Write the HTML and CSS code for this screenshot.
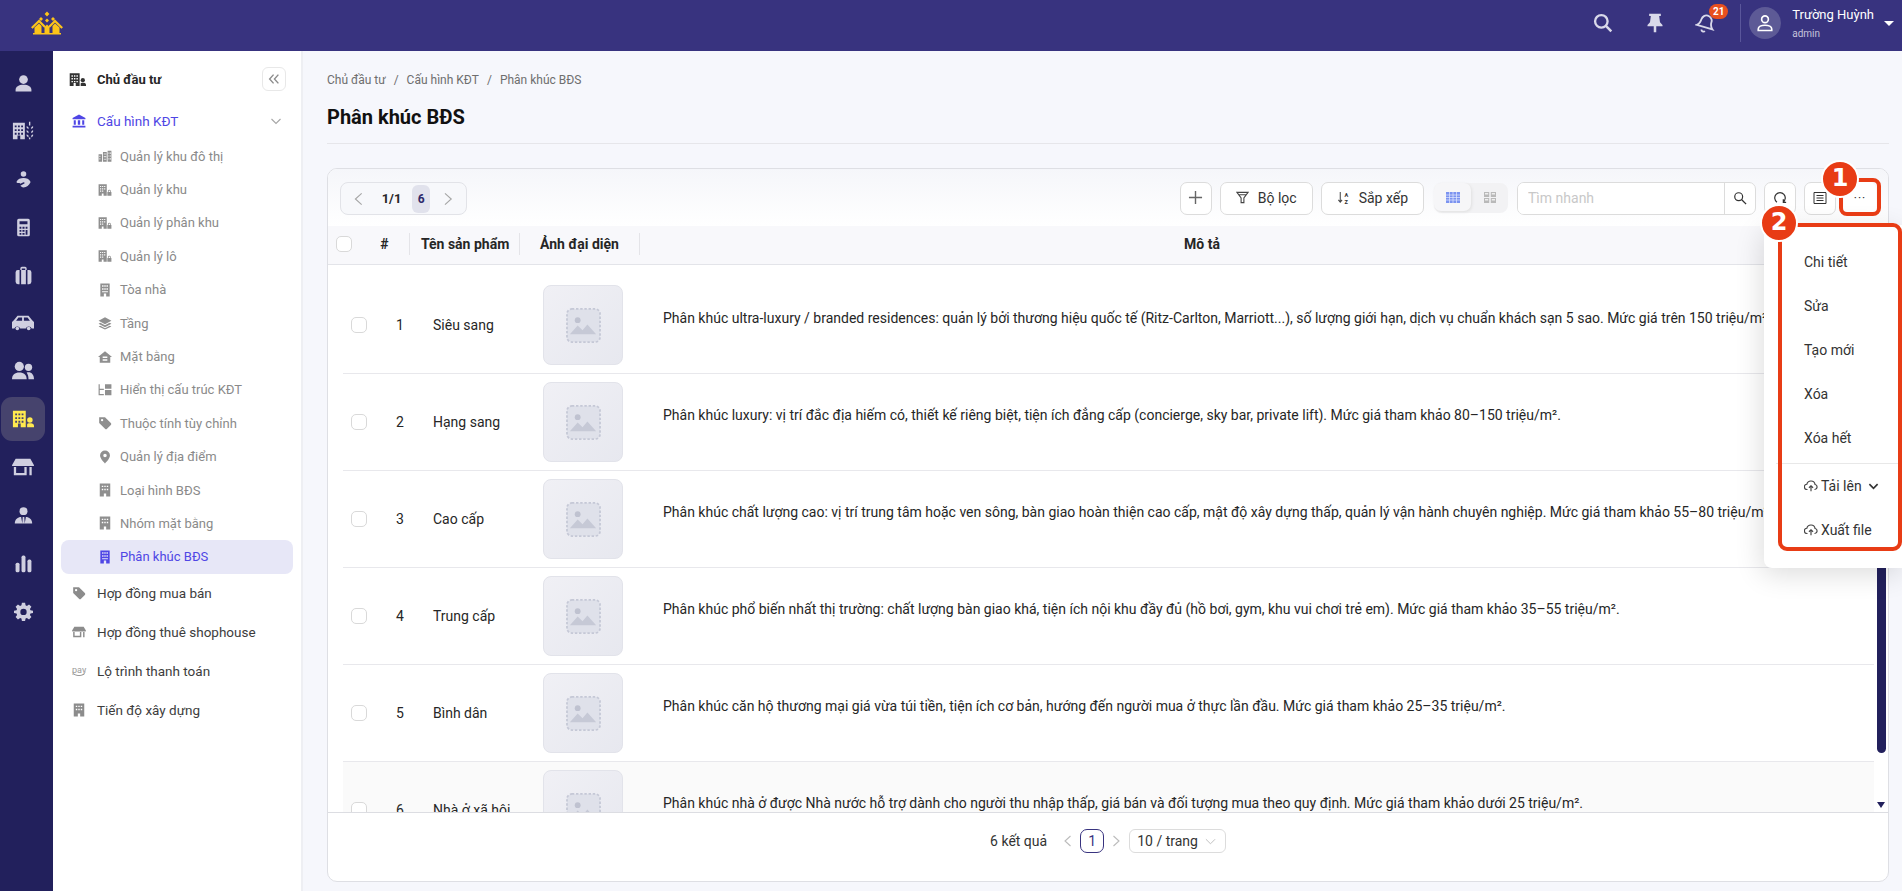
FILE: index.html
```html
<!DOCTYPE html>
<html lang="vi">
<head>
    <meta charset="UTF-8">
    <title>Phân khúc BĐS</title>
    <link rel="stylesheet" href="styles.css">
</head>
<body>
    <svg class="sprites" width="0" height="0">
        <symbol id="i-user" viewBox="0 0 24 24"><circle cx="12" cy="7" r="5.5"/><path d="M2 22v-2c0-4 4-6.5 10-6.5s10 2.500 10 6.500v2z"/></symbol>
        <symbol id="i-city" viewBox="0 0 24 24"><path d="M1 3h13v18H9v-4H6v4H1zM3 6v2h2V6zm3.500 0v2h2V6zM10 6v2h2V6zM3 10v2h2v-2zm3.500 0v2h2v-2zM10 10v2h2v-2zM3 14v2h2v-2zm3.500 0v2h2v-2zM10 14v2h2v-2z" fill-rule="evenodd"/><path d="M18.500 2H20v4h-1.500zM16 6.500l2 1.500v2l-2-1.500zm7 0v2l-2 1.500V8zM16 11l2 1.500v2l-2-1.500zm7 0v2l-2 1.500v-2zM16 15.500l2 1.500v2l-2-1.500zm7 0v2l-2 1.500v-2zM18.500 19H20v2h-1.500z"/></symbol>
        <symbol id="i-blocks" viewBox="0 0 24 24"><path d="M1 9h6v13H1zM8.500 5H15v17H8.500zM16.500 3H23v19h-6.500zM2.500 11.500v2h1.500v-2zM10 7.500v2h1.500v-2zm2.500 0v2H14v-2zM10 12v2h1.500v-2zm2.500 0v2H14v-2zM18 6v2h1.500V6zm2.500 0v2H22V6zM18 11v2h1.500v-2zm2.500 0v2H22v-2zM2.500 16v2h1.500v-2zM10 16.500v2h1.500v-2zm2.500 0v2H14v-2zM18 16v2h1.500v-2zm2.500 0v2H22v-2z" fill-rule="evenodd"/></symbol>
        <symbol id="i-care" viewBox="0 0 24 24"><circle cx="12" cy="5" r="3.500"/><path d="M3 15c2-4 5-5 9-5s7 1 9 5c-2 4-5 7-9 7-2 0-3-1-4-2l5-3c1-.7 0-2-1-1.500l-4 2-1-1c-2 0-3 0-4-1.500z"/></symbol>
        <symbol id="i-calc" viewBox="0 0 24 24"><path d="M6 1h12a2 2 0 0 1 2 2v18a2 2 0 0 1-2 2H6a2 2 0 0 1-2-2V3a2 2 0 0 1 2-2zm1 3v4h10V4zM7 11v2.500h2.300V11zm3.700 0v2.500h2.600V11zm4 0v2.500H17V11zM7 15v2.500h2.300V15zm3.700 0v2.500h2.600V15zm4 0v6H17v-6zM7 19v2h2.300v-2zm3.700 0v2h2.600v-2z" fill-rule="evenodd"/></symbol>
        <symbol id="i-case" viewBox="0 0 24 24"><path d="M8 5V3a2 2 0 0 1 2-2h4a2 2 0 0 1 2 2v2h-1.800V3h-4.400v2zM5 5h2v18H5a3 3 0 0 1-3-3V8a3 3 0 0 1 3-3zm4 0h6v18H9zm8 0h2a3 3 0 0 1 3 3v12a3 3 0 0 1-3 3h-2z"/></symbol>
        <symbol id="i-car" viewBox="0 0 24 24"><path d="M6 4h12l4 5 2 2v7h-2.500a3.500 3.500 0 0 0-6.500 0H9a3.500 3.500 0 0 0-6.500 0H0v-7l2-2zm1 2L4.500 9.500H11V6zm6 0v3.500h6.500L17 6z" fill-rule="evenodd"/><circle cx="5.800" cy="18" r="2"/><circle cx="18.200" cy="18" r="2"/></symbol>
        <symbol id="i-users" viewBox="0 0 24 24"><circle cx="8" cy="7" r="5"/><circle cx="18" cy="8" r="4"/><path d="M0 21c0-5 3-7.500 8-7.500s8 2.500 8 7.500z"/><path d="M16 13.500c5-1 8 2 8 7.500h-6c0-3-.5-5-2-7.500z"/></symbol>
        <symbol id="i-owner" viewBox="0 0 24 24"><path d="M1 3h14v18H9.500v-4h-3v4H1zM3.500 6v2h2V6zM7 6v2h2V6zm3.500 0v2h2V6zM3.500 10v2h2v-2zM7 10v2h2v-2zm3.500 0v2h2v-2zM3.500 14v2h2v-2zM7 14v2h2v-2zm3.500 0v2h2v-2z" fill-rule="evenodd"/><circle cx="19.500" cy="13" r="3"/><path d="M16.500 21v-3c0-1 1-1.500 3-1.500s4.500.5 4.500 2.500v2z"/></symbol>
        <symbol id="i-shop" viewBox="0 0 24 24"><path d="M4 3h16l4 7c0 .8-.5 1-1 1H1c-.5 0-1-.2-1-1z"/><path d="M2 12h2.500v6.500h9V12H16v9H2zM19 12h2.500v9H19z"/></symbol>
        <symbol id="i-agent" viewBox="0 0 24 24"><circle cx="12" cy="6.500" r="5"/><path d="M1 22c0-5 4-8 8-8l1.500 8zM23 22c0-5-4-8-8-8l-1.500 8zM11 14h2l.5 8h-3z"/></symbol>
        <symbol id="i-chart" viewBox="0 0 24 24"><rect x="2" y="11" width="5" height="12" rx="2"/><rect x="9.500" y="2" width="5" height="21" rx="2"/><rect x="17" y="7" width="5" height="16" rx="2"/></symbol>
        <symbol id="i-gear" viewBox="0 0 24 24"><path d="M10 1h4l.6 3.200 1.700.7L19 3l3 3-1.900 2.700.7 1.700L24 11v3l-3.200.6-.7 1.700L22 19l-3 3-2.700-1.900-1.700.7L14 24h-4l-.6-3.200-1.700-.7L5 22l-3-3 1.900-2.700-.7-1.700L0 14v-3l3.200-.6.7-1.700L2 6l3-3 2.700 1.900 1.700-.7zm2 7.500a4 4 0 1 0 0 8 4 4 0 0 0 0-8z" fill-rule="evenodd"/></symbol>
        <symbol id="i-bank" viewBox="0 0 24 24"><path d="M12 1 23 7v2H1V7zM3 10.500h3.500v8H3zm7 0h4v8h-4zm7.500 0H21v8h-3.500zM1 20h22v3H1z"/></symbol>
        <symbol id="i-lock" viewBox="0 0 24 24"><path d="M1 2h14v20H9.500v-4h-3v4H1zM3.500 5v2h2V5zM7 5v2h2V5zm3.500 0v2h2V5zM3.500 9v2h2V9zM7 9v2h2V9zm3.500 0v2h2V9zM3.500 13v2h2v-2zM7 13v2h2v-2z" fill-rule="evenodd"/><path d="M16 22v-6.500h1V14a2.500 2.500 0 0 1 5 0v1.500h1V22zm2.300-6.500h2.400V14a1.200 1.200 0 0 0-2.400 0z" fill-rule="evenodd"/></symbol>
        <symbol id="i-hotel" viewBox="0 0 24 24"><path d="M4 1h16v22h-6v-5h-4v5H4zm3 3v2.500h2.500V4zm3.800 0v2.500h2.400V4zm3.700 0v2.500H17V4zM7 9v2.500h2.500V9zm3.800 0v2.500h2.400V9zm3.700 0v2.500H17V9zM7 14v2h10v-2z" fill-rule="evenodd"/></symbol>
        <symbol id="i-building" viewBox="0 0 24 24"><path d="M3 1h18v22h-7v-5h-4v5H3zm3.500 3.500V7H9V4.500zm4.300 0V7h2.400V4.500zm4.200 0V7h2.500V4.500zM6.500 10v2.500H9V10zm4.300 0v2.500h2.400V10zm4.200 0v2.500h2.500V10z" fill-rule="evenodd"/></symbol>
        <symbol id="i-layers" viewBox="0 0 24 24"><path d="M12 2 23 8l-11 6L1 8z"/><path d="M4 11.500l8 4.500 8-4.500 3 1.700-11 6-11-6z"/><path d="M4 16.500l8 4.500 8-4.500 3 1.500-11 5-11-5z"/></symbol>
        <symbol id="i-home" viewBox="0 0 24 24"><path d="M12 2 24 12h-3v10H3V12H0zm-4 9v2.500h8V11zm0 5v2.500h8V16z" fill-rule="evenodd"/></symbol>
        <symbol id="i-tree" viewBox="0 0 24 24"><path d="M1 2h2v8h7v2H3v7h7v2H1zM12 2h11v8H12zm0 10h11v9H12z" fill-rule="evenodd"/></symbol>
        <symbol id="i-tag" viewBox="0 0 24 24"><path d="M2 2h10l10 10a2.500 2.500 0 0 1 0 3.500L15.500 22a2.500 2.500 0 0 1-3.500 0L2 12zm5 3a2 2 0 1 0 0 4 2 2 0 0 0 0-4z" fill-rule="evenodd"/></symbol>
        <symbol id="i-pin" viewBox="0 0 24 24"><path d="M12 1a8.500 8.500 0 0 1 8.500 8.500C20.500 15 12 23 12 23S3.500 15 3.500 9.500A8.500 8.500 0 0 1 12 1zm0 5.500a3 3 0 1 0 0 6 3 3 0 0 0 0-6z" fill-rule="evenodd"/></symbol>
        <symbol id="i-upload" viewBox="0 0 24 24"><path d="M6 18H5.500a4.500 4.500 0 0 1-.6-9A7.200 7.200 0 0 1 19 9.500a4.300 4.300 0 0 1-.5 8.500H18" fill="none" stroke="currentColor" stroke-width="2"/><path d="M12 21v-9M8.500 15l3.500-3.500 3.500 3.500" fill="none" stroke="currentColor" stroke-width="2"/></symbol>
        <symbol id="i-image" viewBox="0 0 36 36"><rect x="1" y="1" width="34" height="34" rx="5" fill="#dfe1ea" stroke="#c5c8d6" stroke-width="1.800" stroke-dasharray="2.500 1.800"/><circle cx="12" cy="12.500" r="3" fill="#bfc2d0"/><path d="M4 27 12 18l5 5 5-6 9 10z" fill="#c6c9d6"/></symbol>
    </svg>

    <header class="topbar">
        <svg class="logo" viewBox="0 0 32 24" width="32" height="24">
            <path fill="#fcc419" d="M16 .5 18.400 3 16 5.500 13.600 3zM10 6l2 2-2 2-2-2zM22 6l2 2-2 2-2-2zM16 7.500l2 2-2 2-2-2z"/>
            <path fill="none" stroke="#fcc419" stroke-width="2.200" d="M.8 17 8 10l6 6M31.200 17 24 10l-6 6"/>
            <path fill="#fcc419" d="M3.500 16.500 8 12.500l2.500 2.500V22h-7zM13.500 16l2.500-2.500 2.500 2.500v6h-5zM21.500 15 24 12.500l4.500 4V22h-7z"/>
            <path fill="#fcc419" d="M2 22h28v1.500H2z"/>
        </svg>
        <div class="topbar-right">
            <svg class="top-search" viewBox="0 0 24 24" width="20" height="20"><circle cx="10" cy="10" r="7.500" fill="none" stroke="#d9d9ea" stroke-width="2.800"/><path d="M15.500 15.500 22 22" stroke="#d9d9ea" stroke-width="3"/></svg>
            <svg class="top-pin" viewBox="0 0 24 24" width="20" height="20"><path fill="#d9d9ea" d="M5 1h14v2.500h-2L18 11l3 3.500v1.500h-7.500v7h-3v-7H3v-1.500L6 11l1-7.500H5z"/></svg>
            <div class="bell">
                <svg viewBox="0 0 24 24" width="22" height="22"><path d="M2 14c3-1 4-3 5-6 1-3 4-5 7-4s5 4 4 7c-1 3-1 5 1 8zM7 19c0 2 2 3 4 2" fill="none" stroke="#d9d9ea" stroke-width="2"/></svg>
                <span class="badge">21</span>
            </div>
            <div class="top-sep"></div>
            <div class="avatar">
                <svg viewBox="0 0 24 24" width="18" height="18"><circle cx="12" cy="7" r="4.500" fill="none" stroke="#fff" stroke-width="2.200"/><path d="M3 22v-2c0-3 4-5 9-5s9 2 9 5v2z" fill="none" stroke="#fff" stroke-width="2.200"/></svg>
            </div>
            <div class="user-info">
                <div class="user-name">Trường Huỳnh</div>
                <div class="user-role">admin</div>
            </div>
            <span class="caret"></span>
        </div>
    </header>

    <div class="app">
        <nav class="rail">
            <a class="rail-item"><svg class="sm"><use href="#i-user"/></svg></a>
            <a class="rail-item"><svg><use href="#i-city"/></svg></a>
            <a class="rail-item"><svg class="sm"><use href="#i-care"/></svg></a>
            <a class="rail-item"><svg class="sm"><use href="#i-calc"/></svg></a>
            <a class="rail-item"><svg class="sm"><use href="#i-case"/></svg></a>
            <a class="rail-item"><svg><use href="#i-car"/></svg></a>
            <a class="rail-item"><svg><use href="#i-users"/></svg></a>
            <a class="rail-item active"><svg><use href="#i-owner"/></svg></a>
            <a class="rail-item"><svg><use href="#i-shop"/></svg></a>
            <a class="rail-item"><svg class="sm"><use href="#i-agent"/></svg></a>
            <a class="rail-item"><svg class="sm"><use href="#i-chart"/></svg></a>
            <a class="rail-item"><svg class="sm"><use href="#i-gear"/></svg></a>
        </nav>

        <aside class="sidebar">
            <div class="side-head">
                <svg class="side-head-icon"><use href="#i-owner"/></svg>
                <span class="side-title">Chủ đầu tư</span>
                <button class="collapse">
                    <svg viewBox="0 0 16 16" width="14" height="14"><path d="M7.500 3 3 8l4.500 5M13 3 8.500 8l4.500 5" fill="none" stroke="#8c8c8c" stroke-width="1.600"/></svg>
                </button>
            </div>
            <div class="group open">
                <svg class="group-icon"><use href="#i-bank"/></svg>
                <span>Cấu hình KĐT</span>
                <svg class="group-arrow" viewBox="0 0 12 12" width="12" height="12"><path d="M1.500 4 6 8.500 10.500 4" fill="none" stroke="#a6a6a6" stroke-width="1.100"/></svg>
            </div>
            <a class="sub"><svg><use href="#i-blocks"/></svg>Quản lý khu đô thị</a>
            <a class="sub"><svg><use href="#i-lock"/></svg>Quản lý khu</a>
            <a class="sub"><svg><use href="#i-lock"/></svg>Quản lý phân khu</a>
            <a class="sub"><svg><use href="#i-lock"/></svg>Quản lý lô</a>
            <a class="sub"><svg><use href="#i-hotel"/></svg>Tòa nhà</a>
            <a class="sub"><svg><use href="#i-layers"/></svg>Tầng</a>
            <a class="sub"><svg><use href="#i-home"/></svg>Mặt bằng</a>
            <a class="sub"><svg><use href="#i-tree"/></svg>Hiển thị cấu trúc KĐT</a>
            <a class="sub"><svg><use href="#i-tag"/></svg>Thuộc tính tùy chỉnh</a>
            <a class="sub"><svg><use href="#i-pin"/></svg>Quản lý địa điểm</a>
            <a class="sub"><svg><use href="#i-building"/></svg>Loại hình BĐS</a>
            <a class="sub"><svg><use href="#i-building"/></svg>Nhóm mặt bằng</a>
            <a class="sub current"><svg><use href="#i-hotel"/></svg>Phân khúc BĐS</a>
            <a class="group"><svg class="group-icon"><use href="#i-tag"/></svg><span>Hợp đồng mua bán</span></a>
            <a class="group"><svg class="group-icon"><use href="#i-shop"/></svg><span>Hợp đồng thuê shophouse</span></a>
            <a class="group"><span class="pay-icon">pay</span><span>Lộ trình thanh toán</span></a>
            <a class="group"><svg class="group-icon"><use href="#i-building"/></svg><span>Tiến độ xây dựng</span></a>
        </aside>

        <main class="content">
            <div class="breadcrumb"><span>Chủ đầu tư</span><i>/</i><span>Cấu hình KĐT</span><i>/</i><span>Phân khúc BĐS</span></div>
            <h1 class="page-title">Phân khúc BĐS</h1>

            <section class="card">
                <div class="toolbar">
                    <div class="pager-box">
                        <svg viewBox="0 0 12 12" width="14" height="14"><path d="M8.500 1 3 6l5.500 5" fill="none" stroke="#a6a6a6" stroke-width="1"/></svg>
                        <span class="pager-num">1/1</span>
                        <span class="pager-count">6</span>
                        <svg viewBox="0 0 12 12" width="14" height="14"><path d="M3.500 1 9 6l-5.500 5" fill="none" stroke="#a6a6a6" stroke-width="1"/></svg>
                    </div>
                    <div class="tools">
                        <button class="btn square"><svg viewBox="0 0 16 16" width="15" height="15"><path d="M8 1v14M1 8h14" stroke="#666" stroke-width="1.500"/></svg></button>
                        <button class="btn wide"><svg viewBox="0 0 14 14" width="13" height="13"><path d="M1 1.500h12L8.500 7.500v5h-3v-5zM3 4h8" fill="none" stroke="#444" stroke-width="1.200"/></svg>Bộ lọc</button>
                        <button class="btn wide"><svg viewBox="0 0 14 14" width="13" height="13"><path d="M3.500 1v11M1.500 9.500 3.500 12l2-2.500" fill="none" stroke="#444" stroke-width="1.100"/><text x="8" y="6" class="az">A</text><text x="8" y="13.500" class="az">Z</text></svg>Sắp xếp</button>
                        <div class="view-switch">
                            <span class="view on"><svg viewBox="0 0 14 11" width="14" height="11"><path fill="#7b93f0" d="M0 0h14v11H0z"/><path d="M0 3h14M0 5.500h14M0 8h14M3.500 0v11M7 0v11M10.500 0v11" stroke="#e4e9fd" stroke-width=".7"/></svg></span>
                            <span class="view"><svg viewBox="0 0 12 11" width="12" height="11"><path fill="#b9b9b9" d="M0 0h5.200v5H0zM6.800 0H12v5H6.800zM0 6h5.200v5H0zM6.800 6H12v5H6.800z"/><path fill="#eee" d="M1 1h3.200v1.500H1zM7.800 1H11v1.500H7.800zM1 7h3.200v1.500H1zM7.800 7H11v1.500H7.800z"/></svg></span>
                        </div>
                        <div class="search">
                            <input type="text" placeholder="Tìm nhanh">
                            <span class="search-btn"><svg viewBox="0 0 16 16" width="14" height="14"><circle cx="6.500" cy="6.500" r="4.500" fill="none" stroke="#333" stroke-width="1.400"/><path d="M10 10l5 5" stroke="#333" stroke-width="1.500"/></svg></span>
                        </div>
                        <button class="btn square"><svg viewBox="0 0 16 16" width="14" height="14"><path d="M4.500 12.800A6 6 0 1 1 11.500 12.800M11.800 9.500v3.500h3.200" fill="none" stroke="#333" stroke-width="1.400"/></svg></button>
                        <button class="btn square"><svg viewBox="0 0 14 12" width="14" height="12"><path d="M1 .5h12v11H1zM3.500 3.500h7M3.500 6h7M3.500 8.500h7" fill="none" stroke="#333" stroke-width="1"/></svg></button>
                        <button class="btn square more">···</button>
                    </div>
                </div>

                <div class="table-wrap">
                    <div class="table">
                        <div class="row head">
                            <div class="c-check"><span class="checkbox"></span></div>
                            <div class="c-no">#</div>
                            <div class="c-name">Tên sản phẩm</div>
                            <div class="c-img">Ảnh đại diện</div>
                            <div class="c-desc">Mô tả</div>
                        </div>
                        <div class="row first">
                            <div class="c-check"><span class="checkbox"></span></div>
                            <div class="c-no">1</div>
                            <div class="c-name">Siêu sang</div>
                            <div class="c-img"><span class="thumb"><svg><use href="#i-image"/></svg></span></div>
                            <div class="c-desc">Phân khúc ultra-luxury / branded residences: quản lý bởi thương hiệu quốc tế (Ritz-Carlton, Marriott...), số lượng giới hạn, dịch vụ chuẩn khách sạn 5 sao. Mức giá trên 150 triệu/m²</div>
                        </div>
                        <div class="row">
                            <div class="c-check"><span class="checkbox"></span></div>
                            <div class="c-no">2</div>
                            <div class="c-name">Hạng sang</div>
                            <div class="c-img"><span class="thumb"><svg><use href="#i-image"/></svg></span></div>
                            <div class="c-desc">Phân khúc luxury: vị trí đắc địa hiếm có, thiết kế riêng biệt, tiện ích đẳng cấp (concierge, sky bar, private lift). Mức giá tham khảo 80–150 triệu/m².</div>
                        </div>
                        <div class="row">
                            <div class="c-check"><span class="checkbox"></span></div>
                            <div class="c-no">3</div>
                            <div class="c-name">Cao cấp</div>
                            <div class="c-img"><span class="thumb"><svg><use href="#i-image"/></svg></span></div>
                            <div class="c-desc">Phân khúc chất lượng cao: vị trí trung tâm hoặc ven sông, bàn giao hoàn thiện cao cấp, mật độ xây dựng thấp, quản lý vận hành chuyên nghiệp. Mức giá tham khảo 55–80 triệu/m²</div>
                        </div>
                        <div class="row">
                            <div class="c-check"><span class="checkbox"></span></div>
                            <div class="c-no">4</div>
                            <div class="c-name">Trung cấp</div>
                            <div class="c-img"><span class="thumb"><svg><use href="#i-image"/></svg></span></div>
                            <div class="c-desc">Phân khúc phổ biến nhất thị trường: chất lượng bàn giao khá, tiện ích nội khu đầy đủ (hồ bơi, gym, khu vui chơi trẻ em). Mức giá tham khảo 35–55 triệu/m².</div>
                        </div>
                        <div class="row">
                            <div class="c-check"><span class="checkbox"></span></div>
                            <div class="c-no">5</div>
                            <div class="c-name">Bình dân</div>
                            <div class="c-img"><span class="thumb"><svg><use href="#i-image"/></svg></span></div>
                            <div class="c-desc">Phân khúc căn hộ thương mại giá vừa túi tiền, tiện ích cơ bản, hướng đến người mua ở thực lần đầu. Mức giá tham khảo 25–35 triệu/m².</div>
                        </div>
                        <div class="row hover">
                            <div class="c-check"><span class="checkbox"></span></div>
                            <div class="c-no">6</div>
                            <div class="c-name">Nhà ở xã hội</div>
                            <div class="c-img"><span class="thumb"><svg><use href="#i-image"/></svg></span></div>
                            <div class="c-desc">Phân khúc nhà ở được Nhà nước hỗ trợ dành cho người thu nhập thấp, giá bán và đối tượng mua theo quy định. Mức giá tham khảo dưới 25 triệu/m².</div>
                        </div>
                    </div>
                    <div class="scrollbar"><div class="scroll-thumb"></div><span class="scroll-arrow"></span></div>
                </div>

                <div class="card-foot">
                    <span class="foot-count">6 kết quả</span>
                    <svg viewBox="0 0 12 12" width="12" height="12"><path d="M8.500 1 3 6l5.500 5" fill="none" stroke="#bbb" stroke-width="1.100"/></svg>
                    <span class="page-cur">1</span>
                    <svg viewBox="0 0 12 12" width="12" height="12"><path d="M3.500 1 9 6l-5.500 5" fill="none" stroke="#bbb" stroke-width="1.100"/></svg>
                    <span class="page-size">10 / trang<svg viewBox="0 0 12 12" width="11" height="11"><path d="M1 3.500 6 8.500l5-5" fill="none" stroke="#bbb" stroke-width="1"/></svg></span>
                </div>
            </section>
        </main>
    </div>

    <div class="popover">
        <a>Chi tiết</a>
        <a>Sửa</a>
        <a>Tạo mới</a>
        <a>Xóa</a>
        <a>Xóa hết</a>
        <div class="pop-sep"></div>
        <a class="pop-icon"><svg width="14" height="14"><use href="#i-upload"/></svg>Tải lên<svg class="pop-arrow" viewBox="0 0 12 12" width="11" height="11"><path d="M1.500 3.500 6 8l4.500-4.500" fill="none" stroke="#333" stroke-width="1.800"/></svg></a>
        <a class="pop-icon"><svg width="14" height="14"><use href="#i-upload"/></svg>Xuất file</a>
    </div>

    <div class="mark mark-more"></div>
    <div class="mark mark-menu"></div>
    <div class="step step-1">1</div>
    <div class="step step-2">2</div>
</body>
</html>
```

FILE: styles.css
```css
* {
    box-sizing: border-box;
}
html, body {
    height: 100%;
}
body {
    margin: 0;
    font-family: Roboto, "Noto Sans", sans-serif;
    font-size: 14px;
    color: #262626;
    background: #f6f7fc;
    overflow: hidden;
}
.sprites {
    position: absolute;
}
a {
    color: inherit;
}

/* top bar */
.topbar {
    height: 51px;
    background: #38337f;
    display: flex;
    align-items: center;
    justify-content: space-between;
    padding: 0 8px 5px 31px;
}
.topbar-right {
    display: flex;
    align-items: center;
}
.top-search {
    margin-right: 32px;
}
.top-pin {
    margin-right: 30px;
}
.bell {
    position: relative;
    width: 22px;
    height: 22px;
    margin-right: 23px;
}
.badge {
    position: absolute;
    top: -8px;
    left: 14px;
    width: 19px;
    height: 15px;
    border-radius: 8px;
    background: #e8501f;
    color: #fff;
    font-size: 10px;
    font-weight: 700;
    line-height: 15px;
    text-align: center;
}
.top-sep {
    width: 1px;
    height: 38px;
    background: #5a569b;
    margin-right: 8px;
}
.avatar {
    width: 32px;
    height: 32px;
    border-radius: 50%;
    background: #5d5a96;
    display: flex;
    align-items: center;
    justify-content: center;
    margin-right: 11px;
}
.user-name {
    color: #fff;
    font-size: 13px;
    line-height: 16px;
}
.user-role {
    color: #c4c3dc;
    font-size: 10px;
    line-height: 12px;
    margin-top: 5px;
}
.caret {
    width: 0;
    height: 0;
    border-left: 5px solid transparent;
    border-right: 5px solid transparent;
    border-top: 5px solid #fff;
    margin-left: 10px;
}

.app {
    display: flex;
    height: calc(100vh - 51px);
}

/* icon rail */
.rail {
    width: 53px;
    flex: none;
    background: #22205c;
    padding: 10px 0 0 1px;
    display: flex;
    flex-direction: column;
}
.rail-item {
    width: 44px;
    height: 44px;
    flex: none;
    margin-bottom: 4px;
    display: flex;
    align-items: center;
    justify-content: center;
    border-radius: 11px;
}
.rail-item svg {
    width: 22px;
    height: 22px;
    fill: #d0cfe0;
}
.rail-item .sm {
    width: 19px;
    height: 19px;
}
.rail-item.active {
    background: #46436d;
}
.rail-item.active svg {
    fill: #ffe94f;
}

/* second sidebar */
.sidebar {
    width: 250px;
    flex: none;
    background: #fff;
    border-right: 2px solid #eeeff3;
    padding: 16px 8px 0;
}
.side-head {
    display: flex;
    align-items: center;
    height: 24px;
    padding-left: 8px;
    margin-bottom: 11px;
}
.side-head-icon {
    width: 17px;
    height: 17px;
    fill: #333;
    margin-right: 11px;
}
.side-title {
    font-size: 13px;
    font-weight: 700;
    flex: 1;
}
.collapse {
    width: 24px;
    height: 24px;
    padding: 0;
    background: #fff;
    border: 1px solid #e8e8e8;
    border-radius: 6px;
    display: flex;
    align-items: center;
    justify-content: center;
    margin-right: 7px;
}
.group {
    display: flex;
    align-items: center;
    height: 39px;
    padding-left: 11px;
    color: #3d3d3d;
    font-size: 13.5px;
}
.group.open {
    height: 37.5px;
    color: #4f46e5;
}
.group-icon {
    width: 14px;
    height: 14px;
    fill: #8c8c8c;
    margin-right: 11px;
}
.group.open .group-icon {
    fill: #4f46e5;
}
.group-arrow {
    margin-left: auto;
    margin-right: 11px;
}
.pay-icon {
    width: 14px;
    margin-right: 11px;
    font-size: 9px;
    color: #999;
    border-bottom: 1px solid #999;
    border-radius: 0 0 6px 6px;
    line-height: 9px;
    text-align: center;
}
.sub {
    display: flex;
    align-items: center;
    height: 33.4px;
    padding-left: 37px;
    color: #8a8a8a;
    font-size: 13px;
}
.sub svg {
    width: 14px;
    height: 14px;
    fill: #8f8f8f;
    margin-right: 8px;
}
.sub.current {
    background: #e7e7f7;
    border-radius: 8px;
    color: #4f46e5;
}
.sub.current svg {
    fill: #4f46e5;
}

/* content */
.content {
    flex: 1;
    min-width: 0;
    padding: 22px 13px 9px 24px;
    display: flex;
    flex-direction: column;
}
.breadcrumb {
    font-size: 12px;
    line-height: 14px;
    color: #6e6e6e;
}
.breadcrumb i {
    font-style: normal;
    margin: 0 8px;
}
.page-title {
    font-size: 20px;
    font-weight: 700;
    color: #111;
    margin: 18px 0 24px;
    line-height: 24px;
    padding-bottom: 14px;
    border-bottom: 1px solid #e6e6ea;
}
.card {
    flex: 1;
    min-height: 0;
    background: #fff;
    border: 1px solid #dedfe4;
    border-radius: 10px;
    display: flex;
    flex-direction: column;
    overflow: hidden;
}
.toolbar {
    height: 57px;
    flex: none;
    display: flex;
    align-items: flex-start;
    justify-content: space-between;
    padding: 13px 12px 0 12px;
    background: linear-gradient(#f5f6fa, #fff);
}
.pager-box {
    display: flex;
    align-items: center;
    width: 127px;
    height: 33px;
    border: 1px solid #e2e3e8;
    border-radius: 8px;
    background: #f7f8fb;
    padding: 0 11px;
}
.pager-num {
    font-size: 13px;
    font-weight: 700;
    margin-left: 16px;
    width: 31px;
}
.pager-count {
    width: 19px;
    height: 28px;
    background: #e1e2ec;
    border-radius: 6px;
    font-size: 12px;
    font-weight: 700;
    color: #2f2b6b;
    line-height: 28px;
    text-align: center;
    margin-right: 11px;
}
.tools {
    display: flex;
    align-items: flex-start;
}
.btn {
    height: 33px;
    background: #fff;
    border: 1px solid #dcdcdc;
    border-radius: 7px;
    display: flex;
    align-items: center;
    justify-content: center;
    font-family: inherit;
    font-size: 14px;
    color: #333;
    padding: 0 0 2px;
    margin-right: 8px;
}
.btn.square {
    width: 32px;
}
.btn.wide {
    padding: 0 15px 2px;
    gap: 9px;
}
.az {
    font-size: 6px;
    font-weight: 700;
    fill: #333;
}
.view-switch {
    display: flex;
    width: 74px;
    background: #f2f2f4;
    border-radius: 8px;
    height: 30px;
    margin: 1px 9px 0 2px;
}
.view {
    width: 37px;
    height: 28px;
    border-radius: 7px;
    display: flex;
    align-items: center;
    justify-content: center;
}
.view.on {
    background: #f6f6f8;
    box-shadow: 1px 1px 3px #e0e0e0;
}
.search {
    display: flex;
    width: 239px;
    height: 33px;
    border: 1px solid #dcdcdc;
    border-radius: 7px;
    background: #fff;
    margin-right: 8px;
    overflow: hidden;
}
.search input {
    flex: 1;
    min-width: 0;
    border: 0;
    outline: 0;
    padding: 0 10px 2px;
    font-family: inherit;
    font-size: 14px;
}
.search input::placeholder {
    color: #c8c8c8;
}
.search-btn {
    width: 31px;
    padding-bottom: 2px;
    border-left: 1px solid #dcdcdc;
    display: flex;
    align-items: center;
    justify-content: center;
}
.more {
    margin-right: 0;
    border-color: transparent;
    letter-spacing: 1px;
    font-size: 12px;
}

/* table */
.table-wrap {
    flex: 1;
    min-height: 0;
    position: relative;
    overflow: hidden;
}
.table {
    height: 100%;
    overflow: hidden;
    margin-right: 14px;
}
.row {
    display: flex;
    height: 97px;
    align-items: center;
    border-bottom: 1px solid #e8e8ec;
    margin-left: 15px;
    background: #fff;
    font-size: 14px;
}
.row.first {
    height: 109px;
    padding-top: 12px;
}
.row.head {
    height: 39px;
    margin: 0 -14px 0 0;
    padding-bottom: 2px;
    background: #f8f8fb;
    border-bottom: 1px solid #e3e4e9;
    font-weight: 700;
    font-size: 14px;
}
.row.hover {
    background: #fafafa;
}
.row > div {
    flex: none;
}
.c-check {
    width: 43px;
    display: flex;
    padding-left: 8px;
}
.c-no {
    width: 28px;
    text-align: center;
}
.c-name {
    width: 109px;
    padding-left: 19px;
    white-space: nowrap;
}
.c-img {
    width: 120px;
    display: flex;
    justify-content: center;
}
.c-desc {
    padding-left: 20px;
    margin-bottom: 15px;
    white-space: nowrap;
}
.head .c-check {
    width: 33px;
}
.head .c-no {
    width: 49px;
    border-right: 1px solid #e4e4e8;
    padding-right: 1px;
    line-height: 22px;
}
.head .c-name {
    width: 110px;
    padding-left: 11px;
    border-right: 1px solid #e4e4e8;
    line-height: 22px;
}
.head .c-img {
    width: 120px;
    border-right: 1px solid #e4e4e8;
    line-height: 22px;
}
.head .c-desc {
    width: 1124px;
    padding: 0;
    margin: 0;
    text-align: center;
}
.checkbox {
    display: block;
    width: 16px;
    height: 16px;
    border: 1px solid #d9d9d9;
    border-radius: 5px;
    background: #fff;
}
.thumb {
    width: 80px;
    height: 80px;
    background: linear-gradient(135deg, #f0f0f5, #e7e8ef);
    border: 1px solid #e2e3ea;
    border-radius: 8px;
    display: flex;
    align-items: center;
    justify-content: center;
}
.thumb svg {
    width: 35px;
    height: 35px;
}
.scrollbar {
    position: absolute;
    right: 0;
    top: 39px;
    bottom: 0;
    width: 14px;
    background: #fff;
}
.scroll-thumb {
    position: absolute;
    top: 2px;
    left: 3px;
    width: 9px;
    bottom: 59px;
    background: #22205c;
    border-radius: 0 0 5px 5px;
}
.scroll-arrow {
    position: absolute;
    bottom: 4px;
    left: 3px;
    width: 0;
    height: 0;
    border-left: 4.5px solid transparent;
    border-right: 4.5px solid transparent;
    border-top: 6px solid #22205c;
}
.card-foot {
    height: 69px;
    flex: none;
    border-top: 1px solid #dcdde2;
    display: flex;
    align-items: flex-start;
    justify-content: center;
    gap: 6px;
    padding-top: 16px;
    line-height: 24px;
    font-size: 14px;
    color: #333;
}
.card-foot > svg {
    margin-top: 6px;
}
.foot-count {
    margin-right: 9px;
}
.page-cur {
    width: 24px;
    height: 24px;
    border: 1px solid #38337f;
    border-radius: 7px;
    text-align: center;
    line-height: 22px;
    color: #38337f;
}
.page-size {
    display: flex;
    align-items: center;
    gap: 7px;
    height: 24px;
    margin-left: 1px;
    padding: 0 9px 0 7px;
    border: 1px solid #dcdcdc;
    border-radius: 6px;
}

/* popover + annotations */
.popover {
    position: absolute;
    left: 1764px;
    top: 225px;
    width: 138px;
    height: 343px;
    background: #fff;
    border-radius: 8px 0 0 8px;
    box-shadow: -2px 6px 28px rgba(0, 0, 0, .14);
    padding: 15px 0 0 40px;
    font-size: 14px;
    color: #333;
}
.popover a {
    display: flex;
    align-items: center;
    gap: 3px;
    height: 44px;
}
.pop-sep {
    height: 1px;
    background: #e8e8e8;
    margin: 3px 0 0 -28px;
}
.pop-icon svg:first-child {
    color: #444;
}
.pop-arrow {
    margin-left: 3px;
}
.mark {
    position: absolute;
    border: 4px solid #e83c15;
    pointer-events: none;
}
.mark-more {
    left: 1839px;
    top: 178px;
    width: 42px;
    height: 38px;
    border-radius: 8px;
}
.mark-menu {
    left: 1778px;
    top: 223px;
    width: 124px;
    height: 328px;
    border-radius: 9px;
}
.step {
    position: absolute;
    width: 38px;
    height: 38px;
    border-radius: 50%;
    background: #e83c15;
    border: 2px solid #fff;
    color: #fff;
    font-family: "DejaVu Sans", sans-serif;
    font-weight: 700;
    font-size: 24px;
    line-height: 33px;
    text-align: center;
}
.step-1 {
    left: 1821px;
    top: 160px;
}
.step-2 {
    left: 1760px;
    top: 204px;
}
```
